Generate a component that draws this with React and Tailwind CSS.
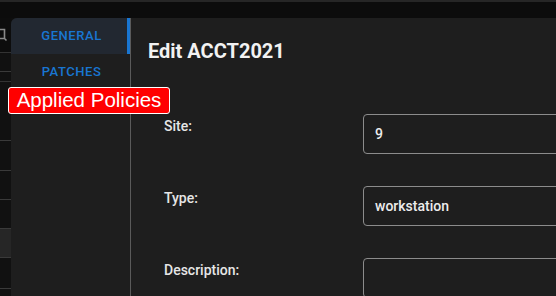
import React from 'react';

const fields = [
  { label: 'Site:', value: '9' },
  { label: 'Type:', value: 'workstation' },
  { label: 'Description:', value: '' },
];

const SideTab = ({ label, active }) => (
  <div
    className={`h-[36px] pl-[5px] flex items-center justify-center text-[13px] font-medium tracking-[0.55px] text-[#1976d2] ${
      active ? 'bg-[#222831] border-r-[3px] border-[#1976d2]' : 'border-r-[3px] border-transparent'
    }`}
  >
    {label}
  </div>
);

const App = () => {
  return (
    <div
      className="relative w-[556px] h-[296px] overflow-hidden bg-[#0e0e0e] flex flex-col"
      style={{ fontFamily: 'Roboto, "Liberation Sans", sans-serif' }}
    >
      {/* top bar of the page behind */}
      <div className="h-[18px] shrink-0 border-t-2 border-[#262626] bg-[#0c0c0c]" />

      <div className="flex flex-1 min-h-0">
        {/* table edge behind the dialog */}
        <div className="w-[11px] shrink-0 flex flex-col bg-[#111111]">
          <div className="h-[35px] bg-[#0d0d0d] border-b border-[#333] relative">
            <svg className="absolute left-[-2px] top-[10px]" width="10" height="14" viewBox="0 0 10 14" fill="none">
              <path d="M0 1.5h6.5v9H0M6.5 10.5l2 2" stroke="#8a8a8a" strokeWidth="1.6" />
            </svg>
          </div>
          <div className="h-[19px] border-b border-[#3a3a3a]" />
          <div className="h-[10px] border-b border-[#333]" />
          <div className="h-[59px] border-b border-[#3a3a3a]" />
          <div className="h-[30px] border-b border-[#3a3a3a]" />
          <div className="h-[29px] border-b border-[#3a3a3a]" />
          <div className="h-[29px] border-b border-[#3a3a3a]" />
          <div className="h-[29px] bg-[#262626] border-b border-[#3a3a3a]" />
          <div className="h-[31px] border-b border-[#3a3a3a]" />
        </div>

        {/* dialog */}
        <div className="flex flex-1 min-w-0 rounded-tl-[6px] overflow-hidden bg-[#1e1e1e]">
          <div className="w-[120px] shrink-0 flex flex-col border-r border-[#5a5a5a]">
            <SideTab label="GENERAL" active />
            <SideTab label="PATCHES" />
          </div>

          <div className="flex-1 min-w-0 pl-[17px] pt-[19px]">
            <h2 className="text-[20px] leading-[28px] font-bold text-[#f2f2f2]">Edit ACCT2021</h2>
            <div className="mt-[49px] pl-[16px] flex flex-col gap-[32px]">
              {fields.map((f) => (
                <div key={f.label} className="flex items-start">
                  <div className="w-[199px] shrink-0 pt-[2px] text-[14px] leading-[20px] font-medium text-[#e6e6e6]">
                    {f.label}
                  </div>
                  <div className="flex-1 h-[40px] rounded-[4px] border border-[#8c8c8c] mr-[-20px] px-[11px] flex items-center text-[14px] font-medium text-[#ececec]">
                    {f.value}
                  </div>
                </div>
              ))}
            </div>
          </div>
        </div>
      </div>

      {/* overlay annotation */}
      <div
        className="absolute left-[8px] top-[87px] w-[162px] h-[27px] flex items-center justify-center rounded-[3px] border border-white bg-[#ff0000] text-white text-[20.5px] leading-none"
        style={{ fontFamily: '"Liberation Sans", Arial, sans-serif' }}
      >
        Applied Policies
      </div>
    </div>
  );
};

export default App;
